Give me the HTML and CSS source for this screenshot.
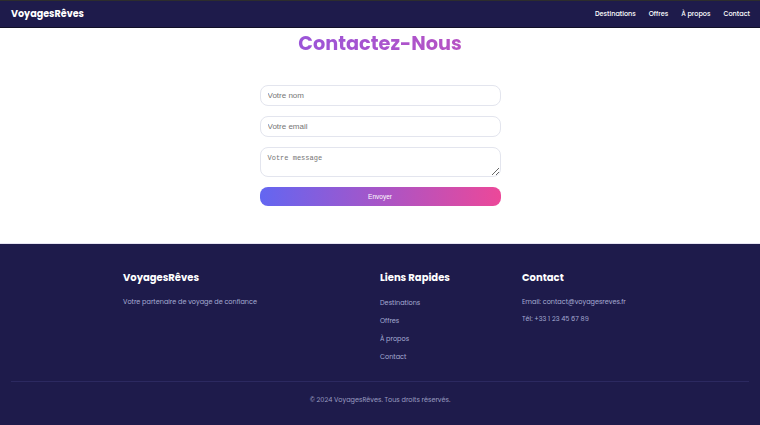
FILE: index.html
```html
<!DOCTYPE html>
<html lang="fr">
<head>
    <meta charset="UTF-8">
    <meta name="viewport" content="width=device-width, initial-scale=1.0">
    <link rel="stylesheet" href="styles.css">
    <title>Contact - VoyagesRêves</title>
</head>
<body>
    <header class="topbar">
        <a href="#" class="logo">VoyagesRêves</a>
        <nav class="menu">
            <a href="#">Destinations</a>
            <a href="#">Offres</a>
            <a href="#">À propos</a>
            <a href="#">Contact</a>
        </nav>
    </header>

    <section class="contact">
        <h1 class="title">Contactez-Nous</h1>
        <form class="contact-form">
            <input type="text" placeholder="Votre nom">
            <input type="email" placeholder="Votre email">
            <textarea placeholder="Votre message"></textarea>
            <button type="button">Envoyer</button>
        </form>
    </section>

    <footer class="footer">
        <div class="footer-cols">
            <div class="col">
                <h3>VoyagesRêves</h3>
                <p>Votre partenaire de voyage de confiance</p>
            </div>
            <div class="col">
                <h3>Liens Rapides</h3>
                <ul class="links">
                    <li><a href="#">Destinations</a></li>
                    <li><a href="#">Offres</a></li>
                    <li><a href="#">À propos</a></li>
                    <li><a href="#">Contact</a></li>
                </ul>
            </div>
            <div class="col">
                <h3>Contact</h3>
                <p>Email: contact@voyagesreves.fr</p>
                <p>Tél: +33 1 23 45 67 89</p>
            </div>
        </div>
        <div class="copyright">© 2024 VoyagesRêves. Tous droits réservés.</div>
    </footer>
</body>
</html>
```

FILE: styles.css
```css
* {
    box-sizing: border-box;
}

body {
    margin: 0;
    font-family: "Poppins", "Open Sans", sans-serif;
    background-color: #ffffff;
}

a {
    text-decoration: none;
    color: inherit;
}

.topbar {
    height: 28px;
    background-color: #1e1b4b;
    border-top: 1px solid #2d2d2d;
    border-bottom: 1px solid #111027;
    display: flex;
    align-items: center;
    justify-content: space-between;
    padding: 0 10px 0 11px;
}

.logo {
    color: #ffffff;
    font-weight: 700;
    font-size: 9.6px;
}

.menu {
    display: flex;
    gap: 13px;
}

.menu a {
    color: #ffffff;
    font-size: 6.5px;
    font-weight: 500;
}

.contact {
    padding: 3px 0 38px;
    display: flex;
    flex-direction: column;
    align-items: center;
}

.title {
    margin: 0 0 28px;
    font-size: 19.3px;
    font-weight: 700;
    line-height: 26px;
    background: linear-gradient(90deg, #9b55d8, #b653c4);
    -webkit-background-clip: text;
    background-clip: text;
    color: transparent;
}

.contact-form {
    width: 241px;
    display: flex;
    flex-direction: column;
    gap: 10px;
}

.contact-form input,
.contact-form textarea {
    border: 1px solid #e3e5ee;
    border-radius: 8px;
    padding: 0 7px;
    font-size: 8px;
    outline: none;
}

.contact-form input {
    height: 21px;
    font-family: "Liberation Sans", Arial, sans-serif;
}

.contact-form textarea {
    height: 30px;
    padding-top: 6px;
    font-family: "Liberation Mono", monospace;
    font-size: 7px;
    resize: vertical;
}

.contact-form button {
    height: 19px;
    border: none;
    border-radius: 8px;
    background: linear-gradient(90deg, #6366f1, #a855c7 50%, #ec4899);
    color: #ffffff;
    font-family: "Liberation Sans", Arial, sans-serif;
    font-size: 6.5px;
}

.footer {
    background-color: #1e1b4b;
    box-shadow: 0 -1px 0 #e6e4f2;
    padding: 27px 11px 0;
    height: 181px;
}

.footer-cols {
    width: 514px;
    margin: 0 auto;
    display: grid;
    grid-template-columns: 2fr 1fr 1fr;
    gap: 27px;
    height: 110px;
}

.col h3 {
    margin: 0 0 12px;
    color: #ffffff;
    font-size: 10px;
    font-weight: 700;
    line-height: 14px;
}

.col p {
    margin: 0 0 7px;
    color: #a6abd3;
    font-size: 6.5px;
    line-height: 10px;
}

.links {
    list-style: none;
    margin: 0;
    padding: 1px 0 0;
}

.links li {
    color: #a6abd3;
    font-size: 6.5px;
    line-height: 10px;
    margin-bottom: 8px;
}

.copyright {
    border-top: 1px solid #2c2960;
    padding-top: 13px;
    text-align: center;
    color: #9a9cc0;
    font-size: 6.5px;
}
```
